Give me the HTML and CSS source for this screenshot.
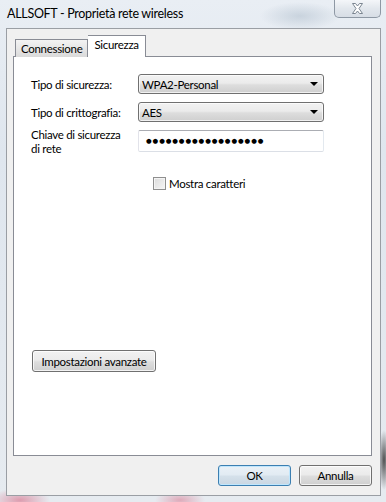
FILE: index.html
```html
<!DOCTYPE html>
<html lang="it">
<head>
    <meta charset="UTF-8">
    <title>ALLSOFT - Proprietà rete wireless</title>
    <link rel="stylesheet" href="styles.css">
</head>
<body>
    <div class="window">
        <div class="titlebar">
            <span class="title">ALLSOFT - Proprietà rete wireless</span>
            <button class="close-btn" aria-label="Chiudi">
                <svg width="13" height="11" viewBox="0 0 13 11">
                    <path d="M1.5 0.5h3l2 2.5 2-2.5h3l-3.5 5 3.5 5h-3l-2-2.5-2 2.5h-3l3.5-5z" fill="#fff" stroke="#7b8591" stroke-width="1"/>
                </svg>
            </button>
        </div>

        <div class="client">
            <div class="tabs">
                <div class="tab">Connessione</div>
                <div class="tab active">Sicurezza</div>
            </div>
            <div class="panel">
                <div class="form">
                    <label class="lbl">Tipo di sicurezza:</label>
                    <div class="select">
                        <span>WPA2-Personal</span>
                        <span class="arrow"></span>
                    </div>

                    <label class="lbl">Tipo di crittografia:</label>
                    <div class="select">
                        <span>AES</span>
                        <span class="arrow"></span>
                    </div>

                    <label class="lbl top">Chiave di sicurezza<br>di rete</label>
                    <div class="textbox">
                        <span class="dots">&#9679;&#9679;&#9679;&#9679;&#9679;&#9679;&#9679;&#9679;&#9679;&#9679;&#9679;&#9679;&#9679;&#9679;&#9679;&#9679;&#9679;&#9679;</span>
                    </div>
                </div>

                <div class="check-row">
                    <span class="checkbox"></span>
                    <span>Mostra caratteri</span>
                </div>

                <button class="btn advanced">Impostazioni avanzate</button>
            </div>

            <div class="actions">
                <button class="btn default">OK</button>
                <button class="btn">Annulla</button>
            </div>
        </div>
    </div>
</body>
</html>
```

FILE: styles.css
```css
body {
    margin: 0;
    padding: 0;
    font-family: Lato, "Noto Sans", sans-serif;
    font-size: 11.5px;
    letter-spacing: -0.3px;
    color: #000;
    overflow: hidden;
}
.window {
    width: 386px;
    height: 502px;
    display: flex;
    flex-direction: column;
    background:
        radial-gradient(ellipse 30px 12px at 20px 500px, rgba(214, 90, 120, 0.55), transparent),
        radial-gradient(ellipse 25px 10px at 180px 500px, rgba(214, 90, 120, 0.45), transparent),
        radial-gradient(ellipse 40px 14px at 300px 16px, rgba(170, 185, 200, 0.5), transparent),
        radial-gradient(ellipse 6px 30px at 384px 460px, rgba(40, 40, 40, 0.8), transparent),
        linear-gradient(to bottom, #e9eef4 0%, #dfe6ee 30%, #e6ebf0 100%);
}
.titlebar {
    height: 28px;
    display: flex;
    justify-content: space-between;
    align-items: flex-start;
    padding: 0 5px 0 7px;
    box-sizing: border-box;
}
.title {
    font-size: 12.5px;
    line-height: 28px;
    color: #000;
}
.close-btn {
    width: 47px;
    height: 18px;
    margin: 0;
    padding: 0;
    border: 1px solid #8e98a4;
    border-top: none;
    border-radius: 0 0 5px 5px;
    background: linear-gradient(to bottom, #f4f6f9, #e2e7ed 50%, #d7dde5);
    display: flex;
    align-items: center;
    justify-content: center;
}
.client {
    flex: 1;
    margin: 0 5px 6px 6px;
    border: 1px solid #9a9ea4;
    background-color: #f0f0f0;
    padding: 7px 8px 8px 6px;
    display: flex;
    flex-direction: column;
}
.tabs {
    display: flex;
    align-items: flex-end;
    height: 21px;
    padding-left: 2px;
    position: relative;
    z-index: 1;
    margin-bottom: -1px;
}
.tab {
    height: 17px;
    line-height: 18px;
    padding: 0 5px;
    border: 1px solid #898c95;
    border-bottom: none;
    background: linear-gradient(to bottom, #f3f3f3, #e7e7e7 50%, #dadada);
    white-space: nowrap;
}
.tab.active {
    height: 21px;
    line-height: 17px;
    background: #fff;
    border-left: none;
    padding: 0 6px 0 6px;
}
.panel {
    height: 400px;
    border: 1px solid #898c95;
    background: #fff;
    padding: 17px 0 0 17px;
    box-sizing: border-box;
    display: flex;
    flex-direction: column;
    align-items: flex-start;
}
.form {
    display: grid;
    grid-template-columns: 107px 186px;
    row-gap: 8px;
}
.lbl {
    display: flex;
    align-items: center;
    white-space: nowrap;
}
.lbl.top {
    display: block;
    height: 22px;
    line-height: 14px;
    margin-top: -2px;
}
.select {
    height: 20px;
    box-sizing: border-box;
    border: 1px solid #707070;
    border-radius: 3px;
    background: linear-gradient(to bottom, #f2f2f2 0%, #ebebeb 45%, #dddddd 55%, #cfcfcf 100%);
    display: flex;
    align-items: center;
    justify-content: space-between;
    padding: 0 5px 0 3px;
    box-shadow: inset 0 0 0 1px rgba(255, 255, 255, 0.7);
}
.arrow {
    width: 0;
    height: 0;
    border-left: 4px solid transparent;
    border-right: 4px solid transparent;
    border-top: 4px solid #000;
}
.textbox {
    height: 22px;
    box-sizing: border-box;
    border: 1px solid #dbdfe6;
    border-top-color: #abadb3;
    border-left-color: #e2e3ea;
    border-right-color: #e3e9ef;
    border-radius: 2px;
    display: flex;
    align-items: center;
    padding-left: 7px;
}
.dots {
    font-family: "DejaVu Sans", sans-serif;
    font-size: 6.5px;
    letter-spacing: 0.9px;
}
.check-row {
    margin: 25px 0 0 122px;
    display: flex;
    align-items: center;
    gap: 3px;
}
.checkbox {
    width: 11px;
    height: 11px;
    border: 1px solid #8f8f8f;
    background: linear-gradient(135deg, #dcdcdc, #f6f6f6);
    box-shadow: inset 0 0 0 1px #f4f4f4;
}
.btn {
    font-family: Lato, "Noto Sans", sans-serif;
    font-size: 11.5px;
    letter-spacing: -0.3px;
    color: #000;
    height: 21px;
    padding: 0 6px;
    border: 1px solid #707070;
    border-radius: 3px;
    white-space: nowrap;
    background: linear-gradient(to bottom, #f2f2f2 0%, #ebebeb 45%, #dddddd 55%, #cfcfcf 100%);
    box-shadow: inset 0 0 0 1px rgba(255, 255, 255, 0.75);
}
.advanced {
    margin: 160px 0 0 1px;
    width: 124px;
    height: 22px;
}
.actions {
    display: flex;
    justify-content: flex-end;
    gap: 8px;
    margin-top: 9px;
}
.actions .btn {
    width: 73px;
}
.btn.default {
    border-color: #3c7fb1;
    background: linear-gradient(to bottom, #eaf1f7 0%, #e2ebf3 45%, #d4e0ea 55%, #c9d6e2 100%);
    box-shadow: inset 0 0 0 1px #bfe6fd;
}
```
